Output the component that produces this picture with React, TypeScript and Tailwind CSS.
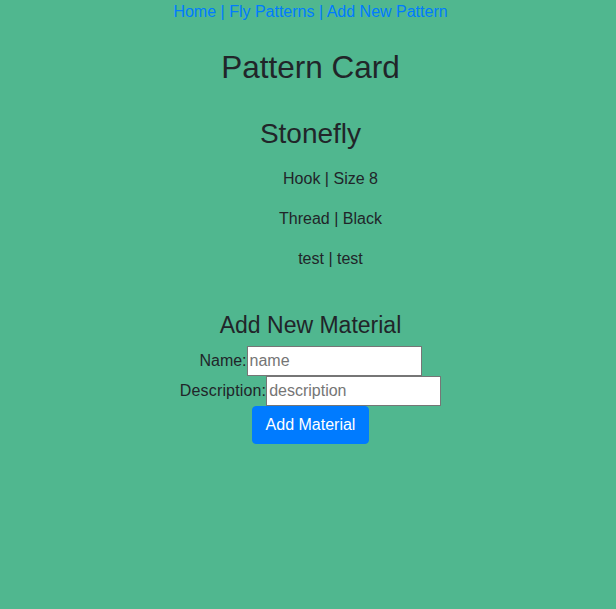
import React from 'react'

const materials = [
  { name: 'Hook', description: 'Size 8' },
  { name: 'Thread', description: 'Black' },
  { name: 'test', description: 'test' },
]

export default function App() {
  return (
    <div className="min-h-[609px] w-full bg-[#50b78f] pl-[5px] text-center text-[16px] leading-[24px] text-[#212529] [font-family:'Liberation_Sans',Arial,sans-serif]">
      {/* Nav */}
      <nav className="h-[24px] text-[#007bff]">
        <a href="#">Home</a> | <a href="#">Fly Patterns</a> | <a href="#">Add New Pattern</a>
      </nav>

      <h2 className="mt-[24px] text-[31.5px] leading-[38px] font-medium">Pattern Card</h2>

      <div className="mt-[31px]">
        <h3 className="text-[28px] leading-[34px] font-medium">Stonefly</h3>
        <ul className="mt-[16px] pl-10">
          {materials.map(m => (
            <li key={m.name} className="mb-[16px]">
              {m.name} | {m.description}
            </li>
          ))}
        </ul>
      </div>

      {/* Add material form */}
      <div className="mt-[40px]">
        <h4 className="text-[23px] leading-[28px] font-medium">Add New Material</h4>
        <form className="mt-[7px] flex flex-col items-center" onSubmit={e => e.preventDefault()}>
          <div className="flex h-[30px] items-center">
            <label>Name:</label>
            <input
              placeholder="name"
              className="h-[30px] w-[175px] border border-[#767676] bg-white px-[2px] text-[16px] placeholder:text-[#757575]"
            />
          </div>
          <div className="flex h-[30px] items-center">
            <label className="tracking-[0.15px]">Description:</label>
            <input
              placeholder="description"
              className="h-[30px] w-[175px] border border-[#767676] bg-white px-[2px] text-[16px] placeholder:text-[#757575]"
            />
          </div>
          <button
            type="submit"
            className="h-[38px] rounded-[4px] border border-[#007bff] bg-[#007bff] px-[13px] text-white"
          >
            Add Material
          </button>
        </form>
      </div>
    </div>
  )
}
